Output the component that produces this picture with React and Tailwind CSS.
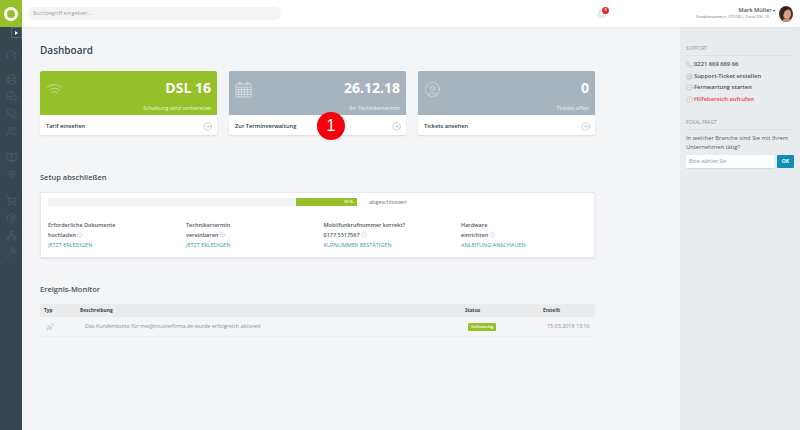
import { Gauge, Printer, MessagesSquare, PhoneCall, Users, BookOpen, Wifi, ShoppingCart, AtSign, Network, Wrench, CircleUser, Bell, Phone, CircleCheck, CircleAlert, CircleHelp, CircleArrowRight, Rocket } from 'lucide-react';

const sideIcons = [
    { Icon: Gauge, mt: 'mt-[22px]' },
    { Icon: Printer, mt: 'mt-[14px]' },
    { Icon: MessagesSquare, mt: 'mt-[6px]' },
    { Icon: PhoneCall, mt: 'mt-[6px]' },
    { Icon: Users, mt: 'mt-[7px]' },
    { Icon: BookOpen, mt: 'mt-[15px]' },
    { Icon: Wifi, mt: 'mt-[6px]' },
    { Icon: ShoppingCart, mt: 'mt-[15px]' },
    { Icon: AtSign, mt: 'mt-[7px]' },
    { Icon: Network, mt: 'mt-[6px]' },
    { Icon: Wrench, mt: 'mt-[6px]' },
];

// Kalender mit Raster, lucide hat keinen passenden
function GridCalendar({ className }) {
    return (
        <svg viewBox="0 0 18 18" fill="none" stroke="currentColor" strokeWidth="0.6" className={className}>
            <rect x="1" y="3" width="16" height="14" rx="0.5" />
            <path d="M1 6.5h16M1 9h16M1 11.5h16M1 14h16M4 6.5V17M7 6.5V17M10 6.5V17M13 6.5V17" />
            <circle cx="5" cy="2.5" r="1.3" />
            <circle cx="13" cy="2.5" r="1.3" />
        </svg>
    );
}

const cards = [
    { icon: <Wifi size={17} strokeWidth={0.8} className="mt-[10px] text-white/75" />, title: 'DSL 16', sub: 'Schaltung wird vorbereitet', link: 'Tarif einsehen', color: 'bg-[#95c029]' },
    { icon: <GridCalendar className="mt-[10px] w-[17px] h-[17px] text-white/75" />, title: '26.12.18', sub: 'Ihr Technikertermin', link: 'Zur Terminverwaltung', color: 'bg-[#a8b4bd]' },
    { icon: <CircleUser size={17} strokeWidth={0.7} className="mt-[10px] text-white/75" />, title: '0', sub: 'Tickets offen', link: 'Tickets ansehen', color: 'bg-[#a8b4bd]' },
];

const steps = [
    { a: 'Erforderliche Dokumente', b: 'hochladen', link: 'JETZT ERLEDIGEN' },
    { a: 'Technikertermin', b: 'vereinbaren', link: 'JETZT ERLEDIGEN' },
    { a: 'Mobilfunkrufnummer korrekt?', b: '0177 5317567', link: 'RUFNUMMER BESTÄTIGEN' },
    { a: 'Hardware', b: 'einrichten', link: 'ANLEITUNG ANSCHAUEN' },
];

const support = [
    { Icon: Phone, text: '0221 669 669 66', cls: 'text-[#46525a]' },
    { Icon: CircleUser, text: 'Support-Ticket erstellen', cls: 'text-[#46525a]' },
    { Icon: CircleCheck, text: 'Fernwartung starten', cls: 'text-[#46525a]' },
    { Icon: CircleAlert, text: 'Hilfebereich aufrufen', cls: 'text-[#f0414f]' },
];

function Avatar() {
    return (
        <svg viewBox="0 0 14 16" className="w-[14px] h-[16px] mr-[7px] shrink-0">
            <defs>
                <clipPath id="av"><ellipse cx="7" cy="8" rx="7" ry="8" /></clipPath>
            </defs>
            <g clipPath="url(#av)">
                <rect width="14" height="16" fill="#4a342b" />
                <ellipse cx="8" cy="8" rx="4" ry="5" fill="#d6a283" />
                <path d="M3 16c1-3 3-4 5-4s4 1 5 4z" fill="#c98f6d" />
                <path d="M2 3c3-3 8-3 10 0-3 0-6 1-7 4-1 2-1 5-2 6-2-2-2-7-1-10z" fill="#33231c" />
            </g>
        </svg>
    );
}

function Sidebar() {
    return (
        <div className="w-[22px] shrink-0 bg-[#37474f] flex flex-col items-center relative">
            <div className="w-[22px] h-[27px] bg-[#95c029] flex items-center justify-center shrink-0">
                <div className="w-[14px] h-[14px] rounded-full border-[3px] border-white" />
            </div>
            <div className="absolute left-[11px] top-[27px] w-[11px] h-[11px] bg-[#37474f] border border-[#55656d] flex items-center justify-center">
                <div className="w-0 h-0 border-y-[2px] border-y-transparent border-l-[3px] border-l-white" />
            </div>
            {sideIcons.map(({ Icon, mt }, i) => (
                <Icon key={i} size={11} strokeWidth={1.1} className={`${mt} text-[#5f7079] shrink-0`} />
            ))}
        </div>
    );
}

function TopBar() {
    return (
        <div className="h-[27px] bg-white shadow-[0_1px_2px_rgba(0,0,0,0.06)] flex items-center shrink-0 relative">
            <div className="ml-[6px] w-[253px] h-[13px] rounded-full bg-[#f3f4f6] flex items-center pl-[5px] text-[5.5px] text-[#9aa3a9]">
                Suchbegriff eingeben...
            </div>
            <div className="ml-auto relative mr-[89px]">
                <Bell size={10} strokeWidth={1} className="text-[#8b969d]" />
                <div className="absolute -top-[2px] left-[5px] w-[7px] h-[7px] rounded-full bg-[#e8212e] text-white text-[4px] font-bold flex items-center justify-center">3</div>
            </div>
            <div className="flex flex-col items-end mr-[4px] leading-none">
                <span className="text-[5.6px] font-semibold text-[#46525a]">Mark Müller <span className="text-[3.5px]">▾</span></span>
                <span className="text-[3.9px] text-[#6d787f] mt-[2px] mr-[6px] whitespace-nowrap">Kundennummer: 275740 | Tarial DSL 16</span>
            </div>
            <Avatar />
        </div>
    );
}

function Card({ card }) {
    return (
        <div className="w-[177px] h-[64px] rounded-[2px] bg-white shadow-[0_1px_2px_rgba(0,0,0,0.1)] overflow-hidden">
            <div className={`${card.color} h-[44px] flex justify-between px-[6px] text-white`}>
                {card.icon}
                <div className="flex flex-col items-end">
                    <span className="mt-[8px] text-[14px] font-bold leading-[18px]">{card.title}</span>
                    <span className="mt-[7px] text-[5.5px] text-white/80 leading-[8px]">{card.sub}</span>
                </div>
            </div>
            <div className="h-[20px] pt-[2px] flex items-center justify-between pl-[6px] pr-[5px]">
                <span className="text-[5.7px] font-semibold text-[#2f3a40]">{card.link}</span>
                <CircleArrowRight size={9} strokeWidth={0.9} className="text-[#7b868d]" />
            </div>
        </div>
    );
}

function Setup() {
    return (
        <div className="mt-[10px] w-[555px] h-[66px] bg-white border border-[#e5e7ea] shadow-[0_1px_2px_rgba(0,0,0,0.08)] px-[7px]">
            <div className="flex items-center mt-[5px] h-[8px]">
                <div className="w-[248px] h-[8px] bg-[#f3f4f5]" />
                <div className="w-[61px] h-[8px] bg-[#95c029] text-white text-[4px] font-semibold flex items-center justify-end pr-[4px]">20 %</div>
                <span className="ml-[12px] text-[5.5px] text-[#6c767c]">abgeschlossen</span>
            </div>
            <div className="grid grid-cols-[138px_137.5px_137.5px_100px] mt-[15px]">
                {steps.map(s => (
                    <div key={s.link + s.a} className="text-[5.5px] text-[#4d5960] font-semibold leading-[9.5px]">
                        <div>{s.a}</div>
                        <div className="flex items-center gap-[1px]">
                            {s.b}
                            <CircleHelp size={6} strokeWidth={1} className="text-[#9aa3a9]" />
                        </div>
                        <div className="mt-[1px] font-medium text-[#3f97b5]">{s.link}</div>
                    </div>
                ))}
            </div>
        </div>
    );
}

function Monitor() {
    return (
        <div className="mt-[10px] w-[555px]">
            <div className="h-[13px] bg-[#e9ebec] flex items-center text-[4.8px] font-bold text-[#3c474e]">
                <span className="w-[40px] pl-[4px]">Typ</span>
                <span className="w-[385px]">Beschreibung</span>
                <span className="w-[78px]">Status</span>
                <span>Erstellt</span>
            </div>
            <div className="h-[20px] border-b border-[#eceef0] flex items-center text-[5.4px] text-[#8a949a]">
                <span className="w-[45px] pl-[6px]"><Rocket size={8} strokeWidth={1.2} className="text-[#a9b1b6]" /></span>
                <span className="w-[383px]">Das Kundenkonto für mw@musterfirma.de wurde erfolgreich aktiviert</span>
                <span className="w-[79px]">
                    <span className="inline-block bg-[#95c029] text-white rounded-[1px] text-[4.2px] font-semibold px-[3px] leading-[8px]">Vollständig</span>
                </span>
                <span className="whitespace-nowrap">15.03.2018 13:16</span>
            </div>
        </div>
    );
}

function RightPanel() {
    return (
        <div className="w-[120px] shrink-0 bg-[#e9ecee] px-[6px] pt-[18px]">
            <div className="text-[4.8px] text-[#8a949a] pb-[3px] border-b border-[#dfe2e5]">SUPPORT</div>
            <div className="mt-[3px] flex flex-col gap-[0.5px]">
                {support.map(({ Icon, text, cls }) => (
                    <div key={text} className={`flex items-center gap-[1px] h-[11px] text-[5.8px] font-semibold ${cls}`}>
                        <Icon size={7} strokeWidth={0.9} className="opacity-70" />
                        {text}
                    </div>
                ))}
            </div>
            <div className="mt-[14px] text-[4.8px] text-[#8a949a] pb-[3px] border-b border-[#dfe2e5]">FOKAL FRAGT</div>
            <div className="mt-[4px] text-[5.8px] text-[#4f5b62] leading-[9.5px]">In welcher Branche sind Sie mit Ihrem Unternehmen tätig?</div>
            <div className="mt-[2px] flex gap-[3px]">
                <div className="w-[88px] h-[13px] bg-white rounded-[1px] flex items-center pl-[3px] text-[5px] text-[#8a949a] shadow-[0_1px_1px_rgba(0,0,0,0.08)]">Bitte wählen Sie</div>
                <div className="w-[17px] h-[13px] bg-[#0f8fb5] rounded-[1px] flex items-center justify-center text-[5px] font-bold text-white">OK</div>
            </div>
        </div>
    );
}

export default function App() {
    return (
        <div className="w-[800px] h-[430px] overflow-hidden flex bg-[#f4f5f7] font-['Open_Sans',sans-serif]">
            <Sidebar />
            <div className="flex-1 flex flex-col min-w-0">
                <TopBar />
                <div className="flex-1 flex min-h-0">
                    <div className="flex-1 pl-[18px] pt-[16px]">
                        <h1 className="text-[10px] leading-[14px] font-semibold text-[#37474f]">Dashboard</h1>
                        <div className="mt-[14px] flex gap-[12px] relative w-[555px]">
                            {cards.map(c => <Card key={c.link} card={c} />)}
                            <div className="absolute left-[277px] top-[41px] w-[28px] h-[28px] rounded-full bg-[#f5000c] text-white text-[16px] font-['Liberation_Sans',sans-serif] flex items-center justify-center">1</div>
                        </div>
                        <h2 className="mt-[37px] text-[7.5px] leading-[10px] font-semibold text-[#46525a]">Setup abschließen</h2>
                        <Setup />
                        <h2 className="mt-[26px] text-[7.5px] leading-[10px] font-semibold text-[#46525a]">Ereignis-Monitor</h2>
                        <Monitor />
                    </div>
                    <RightPanel />
                </div>
            </div>
        </div>
    );
}
